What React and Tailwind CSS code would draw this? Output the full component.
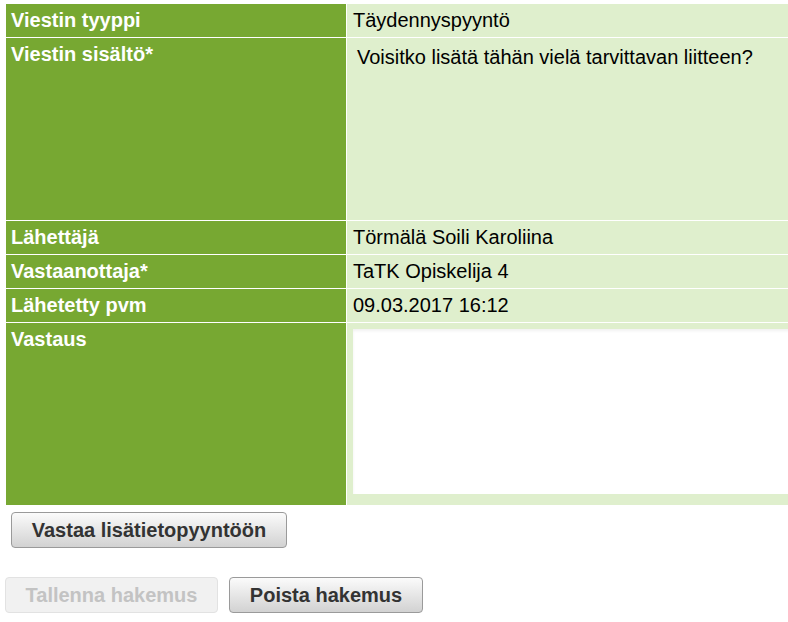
export default function App() {
  const rows = [
    { label: "Viestin tyyppi", value: "Täydennyspyyntö" },
    { label: "Viestin sisältö*", kind: "message", value: "Voisitko lisätä tähän vielä tarvittavan liitteen?" },
    { label: "Lähettäjä", value: "Törmälä Soili Karoliina" },
    { label: "Vastaanottaja*", value: "TaTK Opiskelija 4" },
    { label: "Lähetetty pvm", value: "09.03.2017 16:12" },
    { label: "Vastaus", kind: "reply" },
  ];

  return (
    <div
      className="w-[788px] h-[622px] overflow-hidden bg-white text-black"
      style={{ fontFamily: '"Liberation Sans", Arial, sans-serif' }}
    >
      <div className="pl-[5px] pt-[3px]">
        <div className="flex flex-col gap-px w-[900px] p-px">
          {rows.map((r) => (
            <div key={r.label} className="flex gap-px">
              <div
                className={
                  "w-[340px] shrink-0 bg-[#77a832] text-white font-bold text-[20px] leading-[24px] px-[5px] pt-[4px] " +
                  (r.kind === "message" ? "h-[182px]" : r.kind === "reply" ? "h-[182px]" : "h-[33px]")
                }
              >
                {r.label}
              </div>
              <div className="flex-1 bg-[#dfefcd] text-[20px] leading-[24px]">
                {r.kind === "message" ? (
                  <div className="pl-[10px] pt-[7px]">{r.value}</div>
                ) : r.kind === "reply" ? (
                  <div className="pl-[6px] pt-[6px]">
                    <textarea className="block w-[600px] h-[165px] bg-white border-0 outline-none resize-none shadow-[inset_0_2px_3px_rgba(0,0,0,0.06)]" />
                  </div>
                ) : (
                  <div className="pl-[6px] pt-[4px]">{r.value}</div>
                )}
              </div>
            </div>
          ))}
        </div>
        <div className="pl-[6px] pt-[6px]">
          <button
            type="button"
            className="w-[276px] h-[36px] rounded-[4px] border border-[#9a9a9a] bg-gradient-to-b from-[#fbfbfb] to-[#d2d2d2] text-[#333] font-bold text-[20px]"
          >
            Vastaa lisätietopyyntöön
          </button>
        </div>
        <div className="flex gap-[11px] pt-[29px]">
          <button
            type="button"
            disabled
            className="w-[213px] h-[36px] rounded-[4px] border border-[#e2e2e2] bg-[#f1f1f1] text-[#c3c3c3] font-bold text-[20px]"
          >
            Tallenna hakemus
          </button>
          <button
            type="button"
            className="w-[194px] h-[36px] rounded-[4px] border border-[#9a9a9a] bg-gradient-to-b from-[#fbfbfb] to-[#d2d2d2] text-[#333] font-bold text-[20px]"
          >
            Poista hakemus
          </button>
        </div>
      </div>
    </div>
  );
}
